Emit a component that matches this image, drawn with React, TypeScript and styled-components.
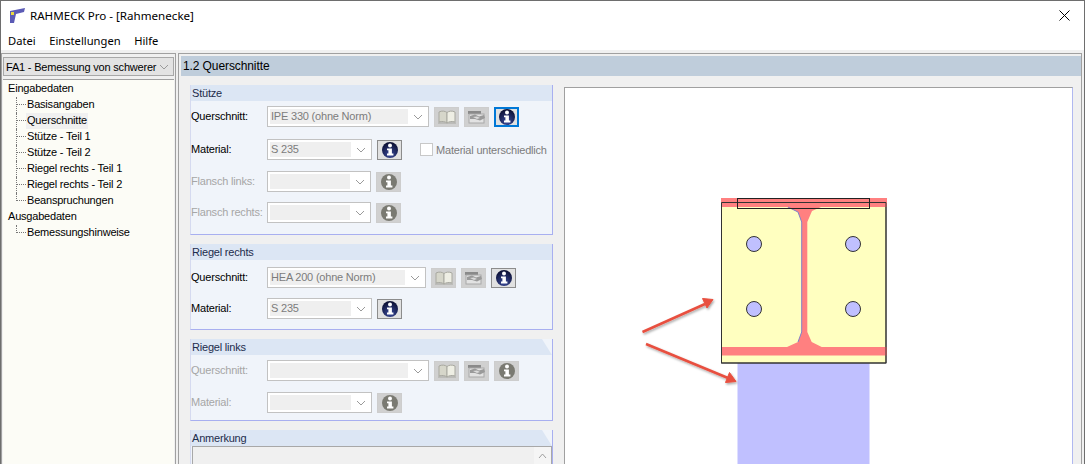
import styled, { createGlobalStyle } from "styled-components";

const GlobalStyle = createGlobalStyle`
    html, body {
        margin: 0;
        padding: 0;
        background: #f0f0f0;
    }
    * {
        box-sizing: border-box;
    }
`;

const Window = styled.div`
    width: 1085px;
    height: 464px;
    overflow: hidden;
    display: flex;
    flex-direction: column;
    background: #f0f0f0;
    border: 1px solid #6e6e6e;
    border-bottom: 0;
    font-family: "Liberation Sans", Arial, sans-serif;
    font-size: 11px;
    letter-spacing: -0.2px;
    color: #000;
`;

const TitleBar = styled.div`
    height: 29px;
    flex-shrink: 0;
    padding: 0 14px 1px 8px;
    display: flex;
    align-items: center;
    gap: 4px;
    background: #fff;
    font-family: "Noto Sans", sans-serif;
    font-size: 11.6px;
    letter-spacing: 0;
`;

const TitleText = styled.span`
    flex: 1;
`;

const MenuBar = styled.div`
    height: 20px;
    flex-shrink: 0;
    padding-left: 7px;
    display: flex;
    gap: 13.5px;
    align-items: center;
    background: #fff;
    font-family: "Noto Sans", sans-serif;
    font-size: 11.2px;
    letter-spacing: 0;
`;

const Main = styled.div`
    flex: 1;
    min-height: 0;
    margin-top: 3px;
    padding-right: 2px;
    display: flex;
    gap: 2px;
`;

const SidePanel = styled.div`
    width: 175px;
    flex-shrink: 0;
    padding: 3px 1px 0 1px;
    display: flex;
    flex-direction: column;
    gap: 3px;
    border-top: 1px solid #a0a0a0;
    border-right: 1px solid #a0a0a0;
    border-left: 1px solid #a0a0a0;
`;

const ModuleSelect = styled.div`
    height: 19px;
    flex-shrink: 0;
    padding: 0 4px 0 2px;
    display: flex;
    align-items: center;
    justify-content: space-between;
    background: #e3e3e3;
    border: 1px solid #a8a8a8;
    white-space: nowrap;
`;

const Tree = styled.div`
    flex: 1;
    padding-top: 1px;
    background: #fcfcf6;
    border-top: 1px solid #a0a0a0;
`;

const TreeRoot = styled.div`
    height: 16px;
    line-height: 15px;
    padding-left: 5px;
    white-space: nowrap;
`;

const TreeRow = styled.div`
    height: 16px;
    padding-left: 13px;
    display: flex;
    align-items: center;
    white-space: nowrap;
`;

const Branch = styled.span<{ $last?: boolean }>`
    width: 10px;
    height: ${props => (props.$last ? "8px" : "16px")};
    margin-bottom: ${props => (props.$last ? "8px" : "0")};
    flex-shrink: 0;
    position: relative;
    border-left: 1px dotted #777;

    &::after {
        content: "";
        position: absolute;
        left: 0;
        top: 7px;
        width: 9px;
        border-top: 1px dotted #777;
    }
`;

const TreeLabel = styled.span<{ $selected?: boolean }>`
    height: 16px;
    padding: 0 1px;
    line-height: 15px;
    background: ${props => (props.$selected ? "#f0f0f0" : "transparent")};
`;

const Content = styled.div`
    flex: 1;
    min-width: 0;
    padding: 2px 0 0 2px;
    display: flex;
    flex-direction: column;
    border-top: 1px solid #a0a0a0;
    border-left: 1px solid #a0a0a0;
    border-right: 1px solid #a0a0a0;
`;

const PageHeader = styled.div`
    height: 20px;
    flex-shrink: 0;
    padding-left: 2px;
    line-height: 20px;
    background: #bfcddb;
    font-size: 12px;
    letter-spacing: -0.1px;
`;

const Columns = styled.div`
    flex: 1;
    min-height: 0;
    padding: 9px 0 0 9px;
    display: flex;
    gap: 11px;
`;

const FormColumn = styled.div`
    width: 363px;
    flex-shrink: 0;
    display: flex;
    flex-direction: column;
    gap: 9px;
`;

const Group = styled.div<{ $height: number }>`
    height: ${props => props.$height}px;
    flex-shrink: 0;
    display: flex;
    flex-direction: column;
    background: #f0f4fa;
    border-left: 1px solid #d5daf0;
    border-right: 1px solid #a8aff0;
    border-bottom: 1px solid #a8aff0;
`;

const GroupTitle = styled.div<{ $cut?: boolean }>`
    height: 16px;
    flex-shrink: 0;
    padding-left: 1px;
    line-height: 16px;
    background: #dce6f4;
    color: #1c2c4c;
    clip-path: ${props =>
        props.$cut ? "polygon(0 0, calc(100% - 10px) 0, 100% 100%, 0 100%)" : "none"};
`;

const GroupBody = styled.div<{ $top: number }>`
    padding-top: ${props => props.$top}px;
    display: flex;
    flex-direction: column;
`;

const Row = styled.div<{ $above?: number }>`
    height: 21px;
    margin-top: ${props => props.$above ?? 0}px;
    display: flex;
    align-items: center;
`;

const FieldLabel = styled.span<{ $disabled?: boolean }>`
    width: 76px;
    padding-bottom: 2px;
    flex-shrink: 0;
    white-space: nowrap;
    color: ${props => (props.$disabled ? "#a6a6a6" : "#000")};
`;

const Combo = styled.div<{ $width: number }>`
    width: ${props => props.$width}px;
    height: 21px;
    flex-shrink: 0;
    padding: 2px 0 2px 2px;
    display: flex;
    align-items: stretch;
    background: #fff;
    border: 1px solid #c2c2c2;
`;

const ComboValue = styled.div`
    flex: 1;
    padding-left: 1px;
    line-height: 14px;
    background: #efefef;
    color: #7c7c7c;
    white-space: nowrap;
`;

const ComboArrow = styled.div`
    width: 20px;
    flex-shrink: 0;
    display: flex;
    align-items: center;
    justify-content: center;
`;

const ToolButton = styled.div<{ $state?: "normal" | "focus" | "disabled" }>`
    width: 25px;
    height: 20px;
    margin-left: 5px;
    flex-shrink: 0;
    display: flex;
    align-items: center;
    justify-content: center;
    background: ${props => (props.$state === "disabled" ? "#d0d0d0" : "#e1e1e1")};
    border: ${props =>
        props.$state === "focus"
            ? "2px solid #0078d7"
            : props.$state === "disabled"
              ? "1px solid #cdcdcd"
              : "1px solid #8c8c8c"};
`;

const CheckArea = styled.label`
    margin-left: 18px;
    display: flex;
    align-items: center;
    gap: 3px;
    color: #7c7c7c;
    white-space: nowrap;
`;

const CheckBox = styled.span`
    width: 13px;
    height: 13px;
    background: #fff;
    border: 1px solid #c8c8c8;
`;

const NoteBox = styled.div`
    flex: 1;
    margin-left: 1px;
    display: flex;
    justify-content: flex-end;
    background: #f0f0f0;
    border: 1px solid #a8a8a8;
    border-bottom: 0;
`;

const NoteScroll = styled.div`
    width: 17px;
    display: flex;
    justify-content: center;
    padding-top: 6px;
    background: #f5f5f5;
`;

const Canvas = styled.div`
    width: 509px;
    flex-shrink: 0;
    margin-top: 2px;
    background: #fff;
    border-top: 1px solid #a0a0a0;
    border-left: 1px solid #a0a0a0;
    border-right: 1px solid #b0b8f0;
`;

const Chevron = () => (
    <svg width="10" height="6" viewBox="0 0 10 6">
        <path d="M1 1 L5 5 L9 1" fill="none" stroke="#9a9a9a" strokeWidth="1" />
    </svg>
);

const InfoIcon = ({ disabled }: { disabled?: boolean }) => (
    <svg width="18" height="18" viewBox="0 0 18 18">
        <defs>
            <radialGradient id="infoLive" cx="50%" cy="80%" r="75%">
                <stop offset="0%" stopColor="#3a4a9a" />
                <stop offset="100%" stopColor="#0c1034" />
            </radialGradient>
        </defs>
        <circle cx="9" cy="9" r="8" fill={disabled ? "#7a7a72" : "url(#infoLive)"} />
        <circle cx="9" cy="4.6" r="2" fill="#fff" />
        <path d="M6 7.4 H10.9 V12.6 H12.4 V14.6 H6 V12.6 H7.4 V9.2 H6 Z" fill="#fff" />
    </svg>
);

const BookIcon = () => (
    <svg width="20" height="14" viewBox="0 0 20 14">
        <path d="M1 12.5 H19 V13.5 H1 Z" fill="#a8a8a2" />
        <path d="M2 2 C5 0.5 8 1 10 2.5 V13 C8 11.5 5 11 2 12 Z" fill="#d6d6ca" stroke="#a8a8a0" />
        <path d="M18 2 C15 0.5 12 1 10 2.5 V13 C12 11.5 15 11 18 12 Z" fill="#eeeee4" stroke="#a8a8a0" />
    </svg>
);

const ExchangeIcon = () => (
    <svg width="20" height="14" viewBox="0 0 20 14">
        <rect x="1" y="1" width="13" height="3" fill="#8a8a8a" />
        <rect x="2" y="4" width="15" height="9" fill="#e2e2e2" stroke="#a8a8a8" />
        <path d="M3 6 L8 4.5 L12 6.5 L17 5 L18 8 L13 10.5 L8 9 L3 9 Z" fill="#9a9a9a" />
        <path d="M6 7 L10 6.5 L13 8 L10 9 Z" fill="#dcdcdc" />
    </svg>
);

const SelectField = ({ width, value }: { width: number; value?: string }) => (
    <Combo $width={width}>
        <ComboValue>{value}</ComboValue>
        <ComboArrow>
            <Chevron />
        </ComboArrow>
    </Combo>
);

const ButtonTrio = ({ info, dim }: { info: "normal" | "focus" | "disabled"; dim?: boolean }) => (
    <>
        <ToolButton $state="disabled">
            <BookIcon />
        </ToolButton>
        <ToolButton $state="disabled">
            <ExchangeIcon />
        </ToolButton>
        <ToolButton $state={info}>
            <InfoIcon disabled={dim} />
        </ToolButton>
    </>
);

const FrameDrawing = () => (
    <svg width="507" height="376" viewBox="565 88 507 376" style={{ display: "block" }}>
        <defs>
            <filter id="arrowShadow" x="-20%" y="-40%" width="140%" height="180%">
                <feDropShadow dx="1" dy="1.5" stdDeviation="1.2" floodColor="#000" floodOpacity="0.35" />
            </filter>
        </defs>
        <rect x="737.5" y="363" width="132" height="101" fill="#c0c0ff" />
        <rect x="721.5" y="202.5" width="164.5" height="160.5" fill="#ffffc0" stroke="#333" />
        <rect x="721" y="198" width="166" height="9" fill="#ff8080" />
        <rect x="721.5" y="347" width="165.5" height="8.5" fill="#ff8080" />
        <polygon
            points="787,207 821,207 812,211 807.3,222 807.3,332 811.7,342 821.7,347 787,347 798,342 801.7,332 801.7,222 798,212"
            fill="#ff8080"
        />
        <polyline points="788,207 798,212 801.7,222 801.7,332 798,342" fill="none" stroke="#8080c8" />
        <path d="M721.5 202.5 H886 V363 H721.5 Z" fill="none" stroke="#333" />
        <rect x="737.5" y="198.5" width="132" height="10" fill="none" stroke="#222" />
        {[
            [754, 244],
            [853, 244],
            [754, 309],
            [853, 309],
        ].map(([cx, cy]) => (
            <circle key={`${cx}-${cy}`} cx={cx} cy={cy} r="7.5" fill="#c0c0ff" stroke="#333" />
        ))}
        <g filter="url(#arrowShadow)" fill="#e8503f" stroke="#e8503f">
            <path d="M642.5 332 L705 304" fill="none" strokeWidth="2.5" />
            <path d="M713 299.5 L702.5 298.5 L707 308 Z" />
            <path d="M646 344 L728 378" fill="none" strokeWidth="2.5" />
            <path d="M736 381.5 L729.5 372.5 L725.5 382.5 Z" />
        </g>
    </svg>
);

const App = () => {
    return (
        <>
            <GlobalStyle />
            <Window>
                <TitleBar>
                    <svg width="17" height="15" viewBox="0 0 17 15">
                        <path d="M1 3 L16 0 L15 4 L7 6 L5 15 L1 15 Z" fill="#5b5bb5" />
                        <rect x="2" y="4" width="3" height="3" fill="#e8d840" />
                    </svg>
                    <TitleText>RAHMECK Pro - [Rahmenecke]</TitleText>
                    <svg width="11" height="11" viewBox="0 0 11 11">
                        <path d="M0.5 0.5 L10.5 10.5 M10.5 0.5 L0.5 10.5" stroke="#000" strokeWidth="1" />
                    </svg>
                </TitleBar>
                <MenuBar>
                    <span>Datei</span>
                    <span>Einstellungen</span>
                    <span>Hilfe</span>
                </MenuBar>
                <Main>
                    <SidePanel>
                        <ModuleSelect>
                            FA1 - Bemessung von schwerer
                            <Chevron />
                        </ModuleSelect>
                        <Tree>
                            <TreeRoot>Eingabedaten</TreeRoot>
                            <TreeRow><Branch /><TreeLabel>Basisangaben</TreeLabel></TreeRow>
                            <TreeRow><Branch /><TreeLabel $selected>Querschnitte</TreeLabel></TreeRow>
                            <TreeRow><Branch /><TreeLabel>Stütze - Teil 1</TreeLabel></TreeRow>
                            <TreeRow><Branch /><TreeLabel>Stütze - Teil 2</TreeLabel></TreeRow>
                            <TreeRow><Branch /><TreeLabel>Riegel rechts - Teil 1</TreeLabel></TreeRow>
                            <TreeRow><Branch /><TreeLabel>Riegel rechts - Teil 2</TreeLabel></TreeRow>
                            <TreeRow><Branch $last /><TreeLabel>Beanspruchungen</TreeLabel></TreeRow>
                            <TreeRoot>Ausgabedaten</TreeRoot>
                            <TreeRow><Branch $last /><TreeLabel>Bemessungshinweise</TreeLabel></TreeRow>
                        </Tree>
                    </SidePanel>
                    <Content>
                        <PageHeader>1.2 Querschnitte</PageHeader>
                        <Columns>
                            <FormColumn>
                                <Group $height={150}>
                                    <GroupTitle>Stütze</GroupTitle>
                                    <GroupBody $top={5}>
                                        <Row>
                                            <FieldLabel>Querschnitt:</FieldLabel>
                                            <SelectField width={162} value="IPE 330 (ohne Norm)" />
                                            <ButtonTrio info="focus" />
                                        </Row>
                                        <Row $above={12}>
                                            <FieldLabel>Material:</FieldLabel>
                                            <SelectField width={105} value="S 235" />
                                            <ToolButton>
                                                <InfoIcon />
                                            </ToolButton>
                                            <CheckArea>
                                                <CheckBox />
                                                Material unterschiedlich
                                            </CheckArea>
                                        </Row>
                                        <Row $above={11}>
                                            <FieldLabel $disabled>Flansch links:</FieldLabel>
                                            <SelectField width={104} />
                                            <ToolButton $state="disabled">
                                                <InfoIcon disabled />
                                            </ToolButton>
                                        </Row>
                                        <Row $above={10}>
                                            <FieldLabel $disabled>Flansch rechts:</FieldLabel>
                                            <SelectField width={104} />
                                            <ToolButton $state="disabled">
                                                <InfoIcon disabled />
                                            </ToolButton>
                                        </Row>
                                    </GroupBody>
                                </Group>
                                <Group $height={86}>
                                    <GroupTitle>Riegel rechts</GroupTitle>
                                    <GroupBody $top={7}>
                                        <Row>
                                            <FieldLabel>Querschnitt:</FieldLabel>
                                            <SelectField width={159} value="HEA 200 (ohne Norm)" />
                                            <ButtonTrio info="normal" />
                                        </Row>
                                        <Row $above={10}>
                                            <FieldLabel>Material:</FieldLabel>
                                            <SelectField width={105} value="S 235" />
                                            <ToolButton>
                                                <InfoIcon />
                                            </ToolButton>
                                        </Row>
                                    </GroupBody>
                                </Group>
                                <Group $height={82}>
                                    <GroupTitle $cut>Riegel links</GroupTitle>
                                    <GroupBody $top={5}>
                                        <Row>
                                            <FieldLabel $disabled>Querschnitt:</FieldLabel>
                                            <SelectField width={162} />
                                            <ButtonTrio info="disabled" dim />
                                        </Row>
                                        <Row $above={11}>
                                            <FieldLabel $disabled>Material:</FieldLabel>
                                            <SelectField width={105} />
                                            <ToolButton $state="disabled">
                                                <InfoIcon disabled />
                                            </ToolButton>
                                        </Row>
                                    </GroupBody>
                                </Group>
                                <Group $height={60}>
                                    <GroupTitle $cut>Anmerkung</GroupTitle>
                                    <NoteBox>
                                        <NoteScroll>
                                            <svg width="9" height="6" viewBox="0 0 9 6">
                                                <path d="M1 5 L4.5 1 L8 5" fill="none" stroke="#a0a0a0" />
                                            </svg>
                                        </NoteScroll>
                                    </NoteBox>
                                </Group>
                            </FormColumn>
                            <Canvas>
                                <FrameDrawing />
                            </Canvas>
                        </Columns>
                    </Content>
                </Main>
            </Window>
        </>
    );
};

export default App;
